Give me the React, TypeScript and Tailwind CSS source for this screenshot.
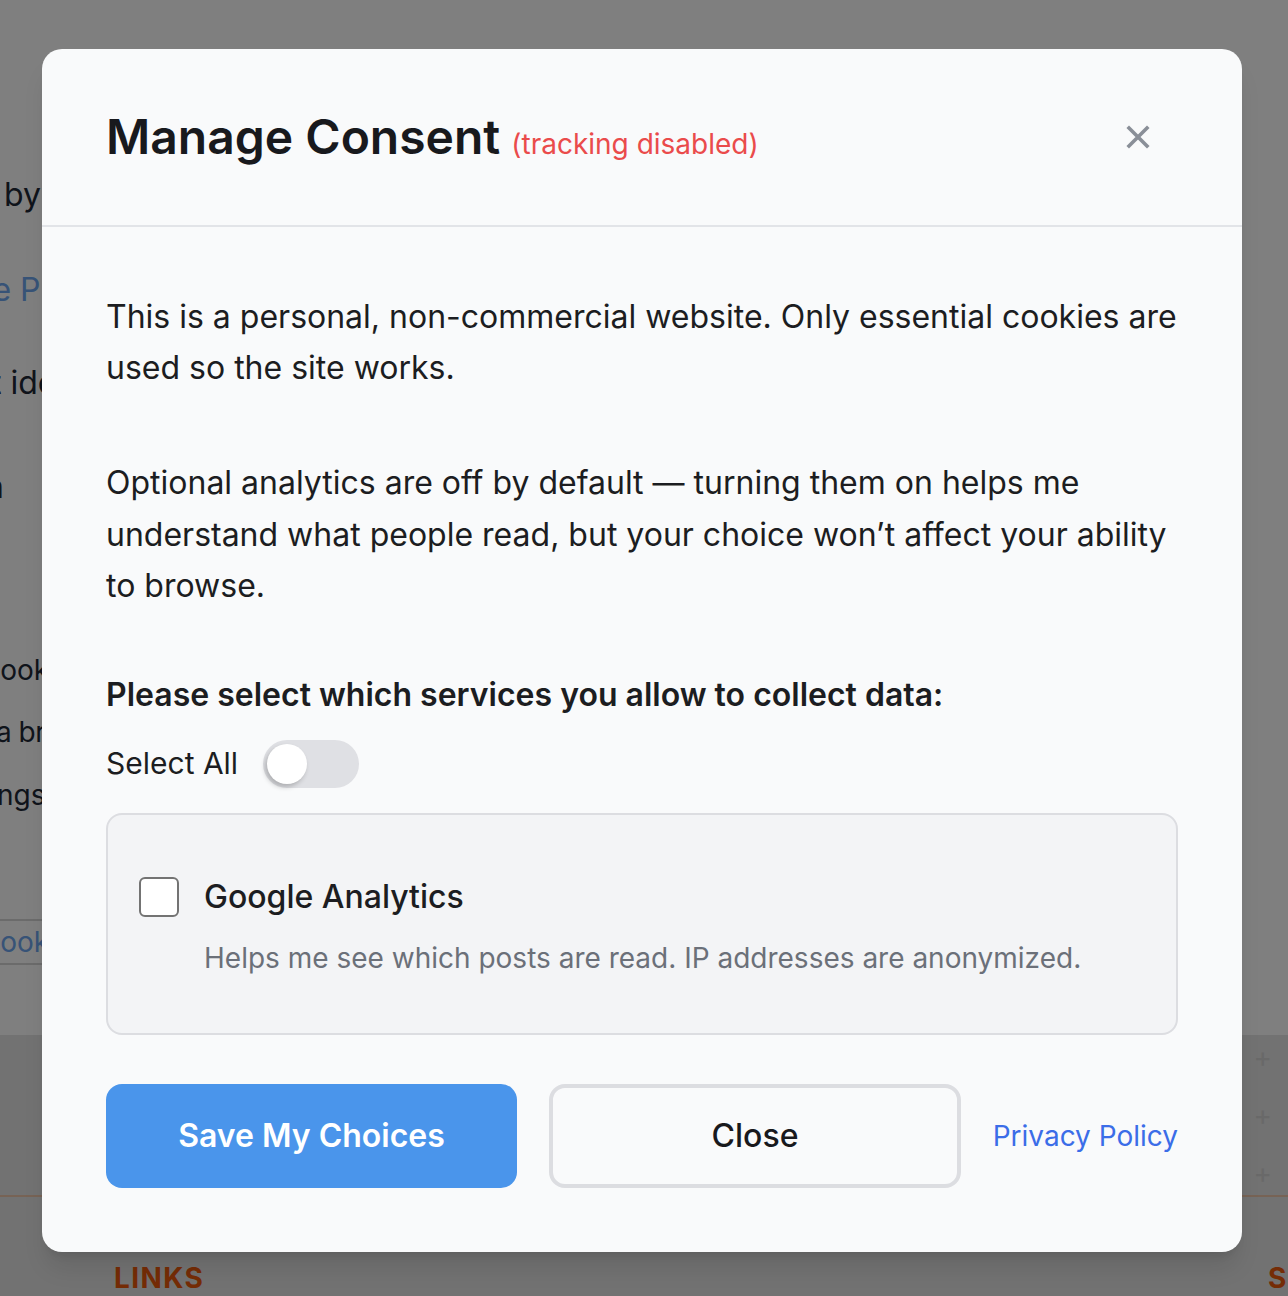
import { useState } from "react";

function BackgroundPage() {
  return (
    <div className="flex h-full flex-col">
      {/* Article body, mostly hidden behind the dialog */}
      <div className="flex h-[1035px] flex-col pt-[170px] text-[32px] leading-[50px] text-[#1f2937] whitespace-nowrap">
        <div className="ml-[4px]">by the author</div>
        <div className="mt-[45px] ml-[-37px] text-[#6fa6ee]">the Privacy Policy</div>
        <div className="mt-[43px] ml-[-9px]">t ideas here</div>
        <div className="mt-[54px] ml-[-15px]">n</div>
        <div className="mt-[133px] ml-[-17px] text-[28px]">book</div>
        <div className="mt-[12px] ml-[-4px] text-[28px] tracking-[-0.5px]">a bright</div>
        <div className="mt-[13px] ml-[-3px] text-[28px]">ngs</div>
        <div className="mt-[99px] flex h-[46px] w-[600px] items-center border-y-2 border-[#d6d6d6] text-[28px] text-[#6fa6ee]">
          <span className="ml-[-17px]">book</span>
        </div>
      </div>

      {/* Footer */}
      <div className="flex flex-1 flex-col bg-[#e4e4e4]">
        <div className="flex h-[162px] flex-col items-end justify-center gap-[34px] border-b-2 border-[#eec7aa] pr-[16px] text-[28px] leading-[24px] text-[#d2d2d2]">
          <span>+</span>
          <span>+</span>
          <span>+</span>
        </div>
        <div className="flex pt-[64px] text-[28px] font-bold leading-[34px] tracking-wider text-[#ea580c] whitespace-nowrap">
          <span className="w-[1268px] shrink-0 pl-[114px]">LINKS</span>
          <span className="shrink-0">SOCIAL</span>
        </div>
      </div>
    </div>
  );
}

function Toggle({ on, onChange }: { on: boolean; onChange: (v: boolean) => void }) {
  return (
    <button
      type="button"
      onClick={() => onChange(!on)}
      className={`flex h-[48px] w-[96px] items-center rounded-full p-[4px] ${
        on ? "justify-end bg-[#4a95eb]" : "justify-start bg-[#dfe0e4]"
      }`}
    >
      <span className="h-[40px] w-[40px] rounded-full bg-white shadow-[-2px_3px_5px_rgba(0,0,0,0.22)]" />
    </button>
  );
}

export default function App() {
  const [all, setAll] = useState(false);
  const [ga, setGa] = useState(false);

  return (
    <div className="relative h-[1296px] w-full overflow-hidden bg-white font-['Inter',sans-serif]">
      <BackgroundPage />

      {/* Overlay */}
      <div className="absolute inset-0 bg-black/50">
        <div className="ml-[42px] mt-[49px] w-[1200px] rounded-[20px] bg-[#f9fafb] shadow-xl">
          {/* Header */}
          <div className="flex h-[178px] items-center justify-between border-b-2 border-[#e2e4e8] px-[64px]">
            <div className="flex items-baseline">
              <h2 className="text-[48px] font-semibold leading-none text-[#18191d]">Manage Consent</h2>
              <span className="ml-[11px] text-[28px] leading-none text-[#ea4b4b]">(tracking disabled)</span>
            </div>
            <button type="button" className="mr-[12px] flex h-[56px] w-[56px] items-center justify-center">
              <svg width="24" height="24" viewBox="0 0 24 24" fill="none" stroke="#8a8f98" strokeWidth="3.6" strokeLinecap="square">
                <path d="M3 3L21 21M21 3L3 21" />
              </svg>
            </button>
          </div>

          {/* Body */}
          <div className="px-[64px] pb-[64px] pt-[64px] text-[#1c1d21]">
            <p className="text-[32px] leading-[1.6]">
              This is a personal, non-commercial website. Only essential cookies are used so the site works.
            </p>
            <p className="mt-[64px] text-[32px] leading-[1.6]">
              Optional analytics are off by default — turning them on helps me understand what people read, but
              your choice won’t affect your ability to browse.
            </p>

            <h3 className="mt-[60px] text-[32px] font-semibold leading-[48px]">
              Please select which services you allow to collect data:
            </h3>
            <div className="mt-[21px] flex h-[48px] items-center gap-[25px]">
              <span className="text-[30px]">Select All</span>
              <Toggle
                on={all}
                onChange={(v) => {
                  setAll(v);
                  setGa(v);
                }}
              />
            </div>

            {/* Services */}
            <div className="mt-[25px] rounded-[16px] border-2 border-[#dcdde1] bg-[#f3f4f6] pb-[52px] pl-[31px] pr-[32px] pt-[56px]">
              <label className="flex items-center gap-[25px]">
                <span
                  onClick={() => setGa(!ga)}
                  className={`h-[40px] w-[40px] rounded-[6px] border-2 ${
                    ga ? "border-[#4a95eb] bg-[#4a95eb]" : "border-[#737373] bg-white"
                  }`}
                />
                <span className="text-[32px] font-medium leading-[1.6]">Google Analytics</span>
              </label>
              <p className="ml-[65px] mt-[14px] text-[28px] leading-[1.6] text-[#6b7079]">
                Helps me see which posts are read. IP addresses are anonymized.
              </p>
            </div>

            {/* Actions */}
            <div className="mt-[49px] flex items-center">
              <button
                type="button"
                className="h-[104px] w-[411px] rounded-[16px] bg-[#4a95eb] text-[32px] font-semibold text-white"
              >
                Save My Choices
              </button>
              <button
                type="button"
                className="ml-[32px] h-[104px] w-[412px] rounded-[16px] border-4 border-[#dcdde1] text-[32px] font-medium text-[#18191d]"
              >
                Close
              </button>
              <a href="#" className="ml-auto text-[28px] text-[#3b6de8]">
                Privacy Policy
              </a>
            </div>
          </div>
        </div>
      </div>
    </div>
  );
}
